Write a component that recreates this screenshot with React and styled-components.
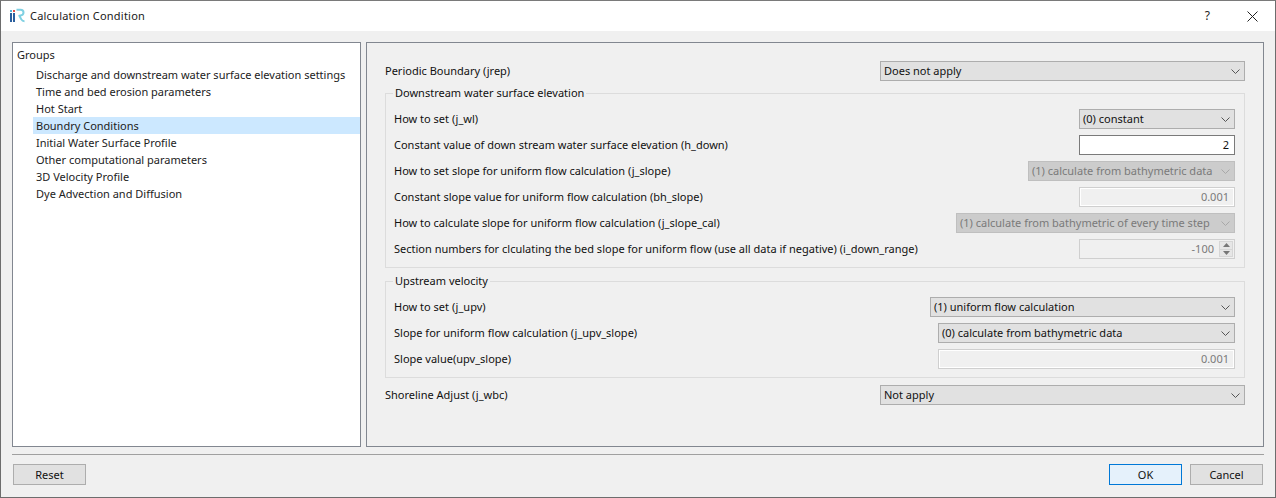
import React from 'react'
import styled, { createGlobalStyle } from 'styled-components'

const GlobalStyle = createGlobalStyle`
  html, body {
    margin: 0;
    padding: 0;
    background: #f0f0f0;
  }
  body {
    font-family: "Noto Sans", "Liberation Sans", sans-serif;
    font-size: 11px;
    color: #000;
  }
`

const Window = styled.div`
  width: 1276px;
  height: 498px;
  box-sizing: border-box;
  display: flex;
  flex-direction: column;
  background: #f0f0f0;
  border: 1px solid #6d6d6d;
  border-top-color: #7a7a7a;
  overflow: hidden;
`

const TitleBar = styled.div`
  height: 30px;
  flex: none;
  display: flex;
  align-items: center;
  background: #fff;
  padding-left: 8px;
`

const TitleText = styled.div`
  margin-left: 5px;
  padding-bottom: 2px;
  font-size: 11px;
  letter-spacing: 0.02em;
  color: #1a1a1a;
`

const TitleButtons = styled.div`
  margin-left: auto;
  display: flex;
  align-items: center;
  gap: 37px;
  padding-right: 17px;
`

const Help = styled.span`
  padding-bottom: 2px;
  font-size: 12px;
  color: #222;
`

const Body = styled.div`
  flex: 1;
  display: flex;
  gap: 5px;
  padding: 11px 11px 0 11px;
  min-height: 0;
`

const TreePanel = styled.div`
  width: 349px;
  height: 405px;
  box-sizing: border-box;
  background: #fff;
  border: 1px solid #828790;
  padding: 3px 0 0 0;
`

const TreeHead = styled.div`
  height: 20px;
  line-height: 17px;
  padding-left: 4px;
  color: #222;
`

const TreeItem = styled.div`
  height: 17px;
  line-height: 17px;
  margin-left: 20px;
  padding-left: 3px;
  white-space: nowrap;
  color: #222;
  background: ${(p) => (p.$selected ? '#cce8ff' : 'transparent')};
`

const SettingsPanel = styled.div`
  width: 898px;
  height: 405px;
  box-sizing: border-box;
  border: 1px solid #828790;
  padding: 18px 18px 0 18px;
  display: flex;
  flex-direction: column;
`

const Row = styled.div`
  height: 20px;
  display: flex;
  align-items: center;
  justify-content: space-between;
  margin-bottom: ${(p) => p.$gap ?? 6}px;
`

const Label = styled.div`
  padding-bottom: 2px;
  white-space: nowrap;
  color: #111;
`

const Group = styled.fieldset`
  margin: 0 0 ${(p) => p.$mb}px 0;
  padding: 9px 9px 8px 8px;
  min-width: 0;
  border: 1px solid #dcdcdc;
`

const Legend = styled.legend`
  margin-left: -1px;
  padding: 0 2px;
  line-height: 14px;
  color: #111;
`

const SelectBox = styled.div`
  width: ${(p) => p.$w}px;
  height: 20px;
  box-sizing: border-box;
  display: flex;
  align-items: center;
  justify-content: space-between;
  padding: 0 4px 0 3px;
  white-space: nowrap;
  background: ${(p) => (p.$disabled ? '#cccccc' : '#e1e1e1')};
  border: 1px solid ${(p) => (p.$disabled ? '#bfbfbf' : '#adadad')};
  color: ${(p) => (p.$disabled ? '#7a7a7a' : '#111')};
`

const SelectText = styled.span`
  padding-bottom: 2px;
`

const NumberBox = styled.div`
  width: 156px;
  height: 20px;
  box-sizing: border-box;
  display: flex;
  align-items: center;
  justify-content: flex-end;
  padding: 0 5px 2px 0;
  background: ${(p) => (p.$disabled ? '#f0f0f0' : '#fff')};
  border: 1px solid ${(p) => (p.$disabled ? '#cfcfcf' : '#7a7a7a')};
  box-shadow: ${(p) => (p.$disabled ? 'inset 0 0 0 1px #fff' : 'none')};
  color: ${(p) => (p.$disabled ? '#7a7a7a' : '#111')};
`

const WideNumberBox = styled(NumberBox)`
  width: 297px;
`

const SpinBox = styled(NumberBox)`
  padding: 0 1px 0 0;
  gap: 5px;
  box-shadow: none;
`

const SpinValue = styled.span`
  padding-bottom: 2px;
`

const SpinButtons = styled.div`
  width: 14px;
  height: 16px;
  display: flex;
  flex-direction: column;
  border: 1px solid #d6d6d6;
  box-sizing: border-box;
  background: #e6e6e6;
`

const SpinHalf = styled.div`
  flex: 1;
  display: flex;
  align-items: center;
  justify-content: center;
  &:first-child {
    border-bottom: 1px solid #d6d6d6;
  }
`

const Separator = styled.div`
  height: 1px;
  flex: none;
  margin: 6px 11px 0 11px;
  background: #a0a0a0;
`

const Footer = styled.div`
  height: 42px;
  flex: none;
  display: flex;
  align-items: flex-start;
  justify-content: space-between;
  padding: 9px 12px 0 12px;
  box-sizing: border-box;
`

const FooterRight = styled.div`
  display: flex;
  gap: 8px;
`

const Button = styled.div`
  width: 73px;
  height: 21px;
  box-sizing: border-box;
  display: flex;
  align-items: center;
  justify-content: center;
  background: ${(p) => (p.$primary ? '#e5f1fb' : '#e1e1e1')};
  border: 1px solid ${(p) => (p.$primary ? '#0078d7' : '#adadad')};
  color: #111;
`

const Logo = () => (
  <svg width="16" height="16" viewBox="0 0 16 16">
    <rect x="1" y="2" width="2" height="2" fill="#58b4d8" />
    <rect x="1" y="5" width="2" height="9" fill="#2a5f9e" />
    <rect x="4" y="2" width="2" height="2" fill="#e0524a" />
    <rect x="4" y="5" width="2" height="9" fill="#2a5f9e" />
    <path
      d="M7.5 1.8h4c2 0 3 1.1 3 2.7 0 1.7-1.1 2.8-3 3L9.5 8M10.5 8l1.8 3.4c.7 1.3 1.6 1.9 3.2 1.9"
      fill="none"
      stroke="#7fd0e2"
      strokeWidth="2"
    />
  </svg>
)

const CloseIcon = () => (
  <svg width="11" height="11" viewBox="0 0 11 11">
    <path d="M.5.5l10 10M10.5.5l-10 10" stroke="#222" strokeWidth="1" fill="none" />
  </svg>
)

const Chevron = ({ color = '#555' }) => (
  <svg width="9" height="5" viewBox="0 0 9 5">
    <path d="M.5.5l4 4 4-4" stroke={color} strokeWidth="1" fill="none" />
  </svg>
)

const Select = ({ w, disabled, children }) => (
  <SelectBox $w={w} $disabled={disabled}>
    <SelectText>{children}</SelectText>
    <Chevron color={disabled ? '#a8a8a8' : '#555'} />
  </SelectBox>
)

const groups = [
  'Discharge and downstream water surface elevation settings',
  'Time and bed erosion parameters',
  'Hot Start',
  'Boundry Conditions',
  'Initial Water Surface Profile',
  'Other computational parameters',
  '3D Velocity Profile',
  'Dye Advection and Diffusion',
]

const App = () => {
  return (
    <>
      <GlobalStyle />
      <Window>
        <TitleBar>
          <Logo />
          <TitleText>Calculation Condition</TitleText>
          <TitleButtons>
            <Help>?</Help>
            <CloseIcon />
          </TitleButtons>
        </TitleBar>
        <Body>
          <TreePanel>
            <TreeHead>Groups</TreeHead>
            {groups.map((g) => (
              <TreeItem key={g} $selected={g === 'Boundry Conditions'}>
                {g}
              </TreeItem>
            ))}
          </TreePanel>
          <SettingsPanel>
            <Row $gap={5}>
              <Label>Periodic Boundary (jrep)</Label>
              <Select w={365}>Does not apply</Select>
            </Row>
            <Group $mb={6}>
              <Legend>Downstream water surface elevation</Legend>
              <Row>
                <Label>How to set (j_wl)</Label>
                <Select w={156}>(0) constant</Select>
              </Row>
              <Row>
                <Label>Constant value of down stream water surface elevation (h_down)</Label>
                <NumberBox>2</NumberBox>
              </Row>
              <Row>
                <Label>How to set slope for uniform flow calculation (j_slope)</Label>
                <Select w={207} disabled>(1) calculate from bathymetric data</Select>
              </Row>
              <Row>
                <Label>Constant slope value for uniform flow calculation (bh_slope)</Label>
                <NumberBox $disabled>0.001</NumberBox>
              </Row>
              <Row>
                <Label>How to calculate slope for uniform flow calculation (j_slope_cal)</Label>
                <Select w={279} disabled>(1) calculate from bathymetric of every time step</Select>
              </Row>
              <Row $gap={0}>
                <Label>Section numbers for clculating the bed slope for uniform flow (use all data if negative) (i_down_range)</Label>
                <SpinBox $disabled>
                  <SpinValue>-100</SpinValue>
                  <SpinButtons>
                    <SpinHalf>
                      <svg width="7" height="4" viewBox="0 0 7 4"><path d="M3.5 0L7 4H0z" fill="#777" /></svg>
                    </SpinHalf>
                    <SpinHalf>
                      <svg width="7" height="4" viewBox="0 0 7 4"><path d="M0 0h7L3.5 4z" fill="#777" /></svg>
                    </SpinHalf>
                  </SpinButtons>
                </SpinBox>
              </Row>
            </Group>
            <Group $mb={7}>
              <Legend>Upstream velocity</Legend>
              <Row>
                <Label>How to set (j_upv)</Label>
                <Select w={305}>(1) uniform flow calculation</Select>
              </Row>
              <Row>
                <Label>Slope for uniform flow calculation (j_upv_slope)</Label>
                <Select w={297}>(0) calculate from bathymetric data</Select>
              </Row>
              <Row $gap={0}>
                <Label>Slope value(upv_slope)</Label>
                <WideNumberBox $disabled>0.001</WideNumberBox>
              </Row>
            </Group>
            <Row $gap={0}>
              <Label>Shoreline Adjust (j_wbc)</Label>
              <Select w={365}>Not apply</Select>
            </Row>
          </SettingsPanel>
        </Body>
        <Separator />
        <Footer>
          <Button>Reset</Button>
          <FooterRight>
            <Button $primary>OK</Button>
            <Button>Cancel</Button>
          </FooterRight>
        </Footer>
      </Window>
    </>
  )
}

export default App
